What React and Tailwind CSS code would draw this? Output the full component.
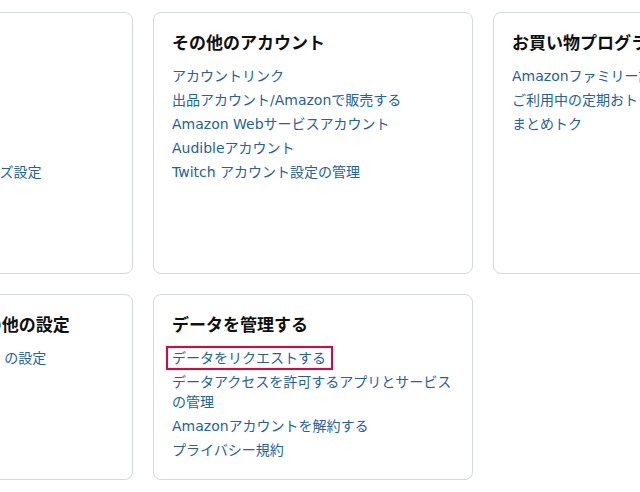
import React from "react";

const FONT = { fontFamily: '"DejaVu Sans", "Noto Sans CJK JP", sans-serif' };

function Card({ title, links, className = "", highlightFirst = false }) {
  return (
    <div className={`rounded-lg border border-[#d5d9d9] bg-white px-[18px] pt-[17px] pb-[15px] ${className}`}>
      <h2
        className="mb-3 text-[17px] font-bold leading-6 text-[#0f1111] whitespace-nowrap"
        style={{ fontFamily: '"Noto Sans CJK JP", sans-serif' }}
      >
        {title}
      </h2>
      <ul>
        {links.map((l, i) => (
          <li key={i} className="mb-1 text-[14px] leading-5 text-[#2162a1]">
            {highlightFirst && i === 0 ? (
              <span className="relative inline-block">
                {l}
                <span className="pointer-events-none absolute -left-[6px] -right-[7px] -top-[2px] -bottom-[2px] border-2 border-[#e8003d]" />
              </span>
            ) : (
              <span>{l}</span>
            )}
          </li>
        ))}
      </ul>
    </div>
  );
}

export default function App() {
  return (
    <div className="h-[492px] w-[640px] overflow-hidden bg-white" style={FONT}>
      <div className="ml-[-187px] grid w-[1000px] grid-cols-[320px_320px_320px] gap-5 pt-3">
        <Card
          className="h-[262px]"
          title="ショッピング設定"
          links={["閲覧履歴", "ウィッシュリスト", "マイストア", "おすすめ商品", "おすすめ商品パーソナライズ設定"]}
        />
        <Card
          className="h-[262px]"
          title="その他のアカウント"
          links={[
            "アカウントリンク",
            "出品アカウント/Amazonで販売する",
            "Amazon Webサービスアカウント",
            "Audibleアカウント",
            "Twitch アカウント設定の管理",
          ]}
        />
        <Card
          className="h-[262px]"
          title="お買い物プログラムとレンタル"
          links={["Amazonファミリー設定", "ご利用中の定期おトク便", "まとめトク"]}
        />
        <Card
          className="h-[186px]"
          title="広告とお知らせ、その他の設定"
          links={["コミュニケーションと広告 の設定"]}
        />
        <Card
          className="h-[186px]"
          highlightFirst
          title="データを管理する"
          links={[
            "データをリクエストする",
            "データアクセスを許可するアプリとサービスの管理",
            "Amazonアカウントを解約する",
            "プライバシー規約",
          ]}
        />
      </div>
    </div>
  );
}
